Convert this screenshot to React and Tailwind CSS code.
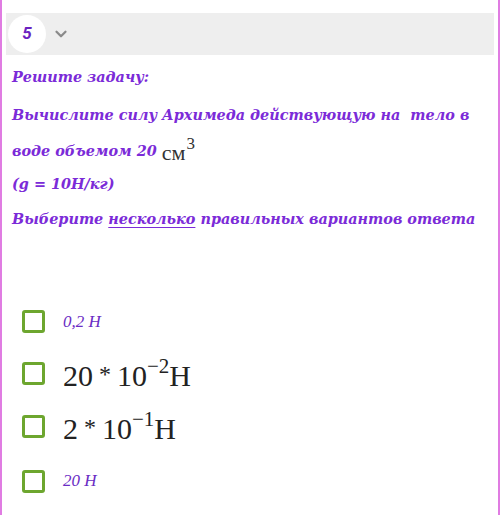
import { ChevronDown } from "lucide-react";

const purple = "text-[#7b2bd8]";
const slab = { fontFamily: '"DejaVu Serif", serif' };
const times = { fontFamily: '"Liberation Serif", "Times New Roman", serif' };

function Box() {
  return (
    <span className="w-[23px] h-[23px] border-[3px] border-[#6da62f] rounded-[3px] shrink-0" />
  );
}

function Option({ children, className = "" }) {
  return (
    <div className={`flex items-center gap-[18px] pl-[20px] ${className}`}>
      <Box />
      {children}
    </div>
  );
}

function Power({ base, exp, tail }) {
  return (
    <span className="inline-flex items-start text-[30px] text-[#222] leading-none whitespace-nowrap" style={times}>
      <span className="mt-[5px]">{base}</span>
      <span className="mx-[6px] mt-[6px] text-[24px]">*</span>
      <span className="mt-[5px]">10</span>
      <span className="text-[21px]">−{exp}</span>
      <span className="mt-[5px]">{tail}</span>
    </span>
  );
}

export default function App() {
  return (
    <div className="w-[500px] h-[515px] bg-white border-l-[2px] border-r-[2px] border-[#e07ce2] overflow-hidden">
      <div className="pt-[13px] pl-[4px] pr-[4px]">
        <div className="h-[42px] bg-[#eeeeee] flex items-center px-[2px]">
          <div className="w-[38px] h-[38px] rounded-full bg-white flex items-center justify-center">
            <span
              className="text-[#6a22c0] font-bold italic text-[17px]"
              style={{ fontFamily: '"Roboto", sans-serif' }}
            >
              5
            </span>
          </div>
          <ChevronDown className="w-[18px] h-[18px] text-[#8a8a8a] ml-[6px]" strokeWidth={3} />
        </div>
      </div>

      <div className={`pl-[10px] ${purple} font-bold italic text-[14.4px]`} style={slab}>
        <p className="mt-[5px] leading-[34px]">Решите задачу:</p>
        <p className="mt-[5px] leading-[32px]">
          Вычислите силу Архимеда действующую на&nbsp; тело в воде объемом 20{" "}
          <span
            className="inline-flex items-start not-italic font-normal text-[#333] leading-none relative top-[4px]"
            style={times}
          >
            <span className="text-[22px] mt-[7px]">см</span>
            <span className="text-[17px] ml-[1px]">3</span>
          </span>
        </p>
        <p className="mt-0 leading-[34px]">(g = 10Н/кг)</p>
        <p className="mt-[1px] leading-[34px]">
          Выберите <span className="underline underline-offset-[3px]">несколько</span>{" "}
          правильных вариантов ответа
        </p>
      </div>

      <div className="mt-[60px] flex flex-col">
        <Option className="h-[51px]">
          <span className="text-[#6a2cc4] italic text-[17px]" style={times}>
            0,2 Н
          </span>
        </Option>
        <Option className="h-[52px]">
          <Power base="20" exp="2" tail="H" />
        </Option>
        <Option className="h-[54px]">
          <Power base="2" exp="1" tail="H" />
        </Option>
        <Option className="h-[56px]">
          <span className="text-[#6a2cc4] italic text-[17px]" style={times}>
            20 Н
          </span>
        </Option>
      </div>
    </div>
  );
}
